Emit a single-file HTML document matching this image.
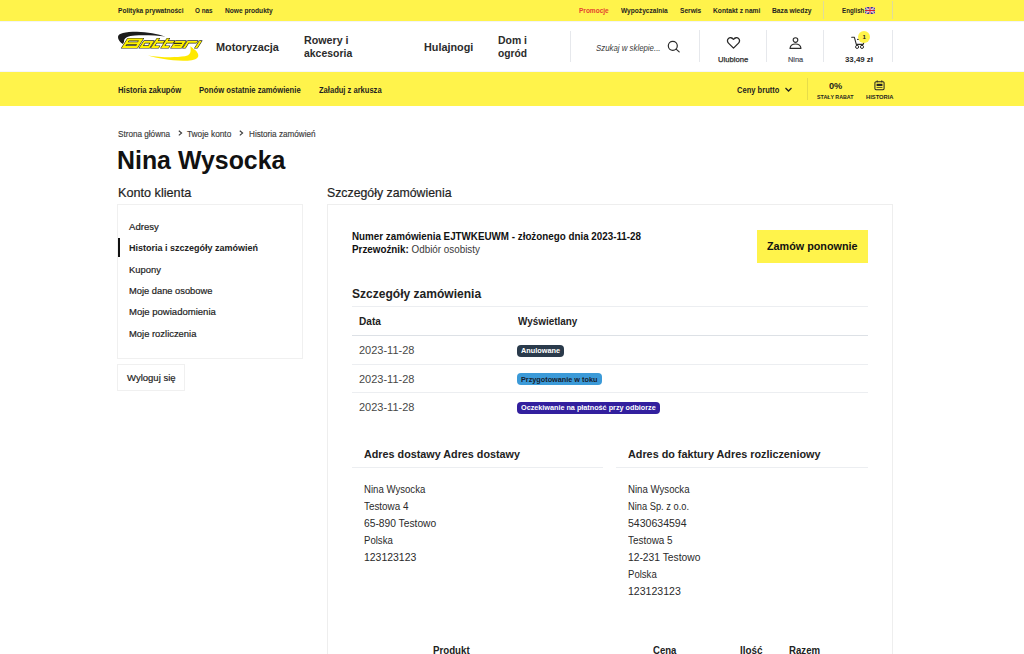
<!DOCTYPE html>
<html><head><meta charset="utf-8"><style>
html,body{margin:0;padding:0;}
body{width:1024px;height:654px;overflow:hidden;position:relative;background:#fff;font-family:"Liberation Sans",sans-serif;}
.t{position:absolute;white-space:nowrap;line-height:1.117;transform-origin:0 0;}
.a{position:absolute;}
</style></head><body>
<div class="a" style="left:0;top:0;width:1024px;height:21px;background:#fff34b;"></div>
<div class="a" style="left:0;top:21px;width:1024px;height:1px;background:#f2f3f8;"></div>
<div class="a" style="left:0;top:71px;width:1024px;height:1px;background:#f5f6fa;"></div>
<div class="a" style="left:823px;top:1px;width:1px;height:18px;background:#e0dc9a;"></div>
<div class="a" style="left:892px;top:1px;width:1px;height:18px;background:#e0dc9a;"></div>
<svg class="a" style="left:865px;top:7px;" width="10" height="7" viewBox="0 0 60 42"><rect width="60" height="42" rx="4" fill="#283f8f"/><path d="M0,0 L60,42 M60,0 L0,42" stroke="#fff" stroke-width="8"/><path d="M0,0 L60,42 M60,0 L0,42" stroke="#d22" stroke-width="3"/><path d="M30,0 V42 M0,21 H60" stroke="#fff" stroke-width="12"/><path d="M30,0 V42 M0,21 H60" stroke="#d3202f" stroke-width="7"/></svg>
<!-- header separators -->
<div class="a" style="left:570px;top:31px;width:1px;height:31px;background:#e6e8ec;"></div>
<div class="a" style="left:699px;top:30px;width:1px;height:32px;background:#e6e8ec;"></div>
<div class="a" style="left:766px;top:30px;width:1px;height:32px;background:#e6e8ec;"></div>
<div class="a" style="left:823px;top:30px;width:1px;height:32px;background:#e6e8ec;"></div>
<div class="a" style="left:892px;top:30px;width:1px;height:32px;background:#e6e8ec;"></div>
<!-- logo -->
<svg class="a" style="left:110px;top:28px;" width="100" height="36" viewBox="110 28 100 36">
<path d="M118,37 C118,33.3 125,31.8 137,31.8 C147,32 158,34.2 165.5,36.6 C157,35.4 145,35 135,35.4 C128,35.8 124.8,37.5 124.2,40 L123.6,44.2 C120.5,43 118.1,40.2 118,37 Z" fill="#1c1c1c"/>
<path d="M148,55.4 C160,57.5 175,57.6 185,56.3 C190,55.3 191.5,52.5 190.3,46.3 C196,50 199,53.5 198.2,56.5 C197,60 190,61 183,60.7 C170,60.3 157,58.2 148,55.4 Z" fill="#ffe900"/>
<g transform="translate(31.09,0) skewX(-33)">
<path d="M121.70,38.60 H137.30 V47.90 H121.70 Z M124.10,40.50 H134.20 V42.30 H124.10 Z M124.10,44.20 H134.80 V46.00 H124.10 Z M139.40,41.00 H149.40 V47.90 H139.40 Z M141.70,42.85 H147.10 V46.00 H141.70 Z M151,38.6 H153.3 V41 H159.8 V42.85 H153.3 V46.05 H158.4 V47.9 H151 Z M161,38.6 H163.3 V41 H169.8 V42.85 H163.3 V46.05 H168.4 V47.9 H161 Z M171,41 H181.4 V47.9 H171 V43.9 H179.1 V42.85 H171 Z M173.30,45.60 H179.10 V46.10 H173.30 Z M183,41 H193.2 V42.85 H185.3 V47.9 H183 Z M194.90,41.00 H197.20 V47.90 H194.90 Z" fill="#fff" stroke="#fff" stroke-width="2.6" stroke-linejoin="round" fill-rule="evenodd"/>
<path d="M121.70,38.60 H137.30 V47.90 H121.70 Z M124.10,40.50 H134.20 V42.30 H124.10 Z M124.10,44.20 H134.80 V46.00 H124.10 Z M139.40,41.00 H149.40 V47.90 H139.40 Z M141.70,42.85 H147.10 V46.00 H141.70 Z M151,38.6 H153.3 V41 H159.8 V42.85 H153.3 V46.05 H158.4 V47.9 H151 Z M161,38.6 H163.3 V41 H169.8 V42.85 H163.3 V46.05 H168.4 V47.9 H161 Z M171,41 H181.4 V47.9 H171 V43.9 H179.1 V42.85 H171 Z M173.30,45.60 H179.10 V46.10 H173.30 Z M183,41 H193.2 V42.85 H185.3 V47.9 H183 Z M194.90,41.00 H197.20 V47.90 H194.90 Z" fill="#2e2e22" stroke="#2e2e22" stroke-width="1.35" stroke-linejoin="round" fill-rule="evenodd"/>
<path d="M121.70,38.60 H137.30 V47.90 H121.70 Z M124.10,40.50 H134.20 V42.30 H124.10 Z M124.10,44.20 H134.80 V46.00 H124.10 Z M139.40,41.00 H149.40 V47.90 H139.40 Z M141.70,42.85 H147.10 V46.00 H141.70 Z M151,38.6 H153.3 V41 H159.8 V42.85 H153.3 V46.05 H158.4 V47.9 H151 Z M161,38.6 H163.3 V41 H169.8 V42.85 H163.3 V46.05 H168.4 V47.9 H161 Z M171,41 H181.4 V47.9 H171 V43.9 H179.1 V42.85 H171 Z M173.30,45.60 H179.10 V46.10 H173.30 Z M183,41 H193.2 V42.85 H185.3 V47.9 H183 Z M194.90,41.00 H197.20 V47.90 H194.90 Z" fill="#fff200" fill-rule="evenodd"/>
</g>
</svg>
<!-- search icon -->
<svg class="a" style="left:666px;top:39px;" width="15" height="15" viewBox="0 0 15 15"><circle cx="6.8" cy="6.8" r="4.5" fill="none" stroke="#2a2a2a" stroke-width="1.2"/><path d="M10.1,10.1 L13.2,12.9" stroke="#2a2a2a" stroke-width="1.2" stroke-linecap="round"/></svg>
<!-- heart -->
<svg class="a" style="left:725.6px;top:36.9px;" width="15" height="12.6" viewBox="0 0 16 14"><path d="M8,12.4 L2.4,6.8 C0.9,5.3 0.9,2.9 2.4,1.6 C3.9,0.3 6.2,0.5 8,2.6 C9.8,0.5 12.1,0.3 13.6,1.6 C15.1,2.9 15.1,5.3 13.6,6.8 Z" fill="none" stroke="#2a2a2a" stroke-width="1.45" stroke-linejoin="round"/></svg>
<!-- user -->
<svg class="a" style="left:788.5px;top:36.9px;" width="13" height="13" viewBox="0 0 14 14"><circle cx="7" cy="3.3" r="2.5" fill="none" stroke="#2a2a2a" stroke-width="1.2"/><path d="M1.1,12.3 C1.4,8.9 4,7.5 7,7.5 C10,7.5 12.6,8.9 12.9,12.3 Z" fill="none" stroke="#2a2a2a" stroke-width="1.2" stroke-linejoin="round"/></svg>
<!-- cart -->
<svg class="a" style="left:851px;top:36px;" width="14" height="14" viewBox="0 0 14 14"><path d="M0.7,1.3 H3.4 L5.3,8.4 H12.2 L13,6" fill="none" stroke="#2a2a2a" stroke-width="1.1" stroke-linejoin="round" stroke-linecap="round"/><path d="M6,3.4 H8" stroke="#2a2a2a" stroke-width="1"/><circle cx="6.1" cy="10.9" r="1.55" fill="none" stroke="#2a2a2a" stroke-width="1"/><circle cx="11" cy="10.9" r="1.55" fill="none" stroke="#2a2a2a" stroke-width="1"/></svg>
<div class="a" style="left:858px;top:30.5px;width:12.4px;height:12.4px;border-radius:50%;background:#fff34b;"></div>
<div class="a" style="left:858px;top:31.7px;width:12.4px;text-align:center;font-size:6.2px;font-weight:700;color:#222;line-height:9px;">1</div>
<!-- sub bar -->
<div class="a" style="left:0;top:72px;width:1024px;height:34px;background:#fff34b;"></div>
<svg class="a" style="left:784px;top:86px;" width="9" height="7" viewBox="0 0 9 7"><path d="M1.5,2 L4.5,5 L7.5,2" fill="none" stroke="#222" stroke-width="1.3"/></svg>
<div class="a" style="left:807px;top:78px;width:1px;height:22px;background:#e6dc4a;"></div>
<svg class="a" style="left:873.5px;top:80.3px;" width="11" height="10.3" viewBox="0 0 12 11"><rect x="1" y="1.8" width="10" height="8.6" rx="1.2" fill="none" stroke="#222" stroke-width="1.1"/><path d="M3.5,0.3 V2.5 M8.5,0.3 V2.5" stroke="#222" stroke-width="1"/><rect x="2.8" y="4" width="6.4" height="2.4" fill="#222"/><path d="M2.8,8 H9.2" stroke="#222" stroke-width="0.8"/></svg>
<!-- breadcrumb chevrons -->
<svg class="a" style="left:177.5px;top:130.3px;" width="5" height="6" viewBox="0 0 5 6"><path d="M0.8,0.7 L3.6,3 L0.8,5.3" fill="none" stroke="#3a3a3a" stroke-width="1.1"/></svg>
<svg class="a" style="left:238.8px;top:130.3px;" width="5" height="6" viewBox="0 0 5 6"><path d="M0.8,0.7 L3.6,3 L0.8,5.3" fill="none" stroke="#3a3a3a" stroke-width="1.1"/></svg>
<!-- left panel -->
<div class="a" style="left:117px;top:204px;width:184px;height:153px;border:1px solid #f0f0f0;"></div>
<div class="a" style="left:117.8px;top:238.3px;width:2.5px;height:18.8px;background:#111;"></div>
<div class="a" style="left:117px;top:364px;width:66px;height:25px;border:1px solid #f0f0f0;"></div>
<!-- right panel -->
<div class="a" style="left:326.6px;top:204.3px;width:564.8px;height:500px;border:1px solid #eeeeee;"></div>
<div class="a" style="left:756.9px;top:229.7px;width:110.9px;height:33.3px;background:#fff34b;"></div>
<!-- table -->
<div class="a" style="left:352px;top:306px;width:516px;height:1px;background:#eceef1;"></div>
<div class="a" style="left:352px;top:334.5px;width:516px;height:1.5px;background:#dde1e6;"></div>
<div class="a" style="left:352px;top:364px;width:516px;height:1px;background:#eceef1;"></div>
<div class="a" style="left:352px;top:392px;width:516px;height:1px;background:#eceef1;"></div>
<div class="a" style="left:517px;top:344.7px;width:47.2px;height:11.9px;border-radius:4px;background:#2a3a4b;"></div>
<div class="a" style="left:517px;top:373.1px;width:84.6px;height:12px;border-radius:4px;background:#3b9ad8;"></div>
<div class="a" style="left:517px;top:401.8px;width:142.6px;height:11.8px;border-radius:4px;background:#321f9e;"></div>
<!-- address borders -->
<div class="a" style="left:352.3px;top:466.5px;width:251px;height:1px;background:#eceef1;"></div>
<div class="a" style="left:616.1px;top:467px;width:252px;height:1px;background:#eceef1;"></div>

<div class="t" id="tb1" style="left:118.00px;top:7.00px;font-size:7.80px;font-weight:700;color:#1f1f1f;transform:scaleX(0.8458);">Polityka prywatności</div>
<div class="t" id="tb2" style="left:195.00px;top:7.00px;font-size:7.80px;font-weight:700;color:#1f1f1f;transform:scaleX(0.8121);">O nas</div>
<div class="t" id="tb3" style="left:224.80px;top:7.00px;font-size:7.80px;font-weight:700;color:#1f1f1f;transform:scaleX(0.8468);">Nowe produkty</div>
<div class="t" id="tb4" style="left:579.20px;top:7.00px;font-size:7.80px;font-weight:700;color:#e5432f;transform:scaleX(0.8355);">Promocje</div>
<div class="t" id="tb5" style="left:620.80px;top:7.00px;font-size:7.80px;font-weight:700;color:#1f1f1f;transform:scaleX(0.8459);">Wypożyczalnia</div>
<div class="t" id="tb6" style="left:679.80px;top:7.00px;font-size:7.80px;font-weight:700;color:#1f1f1f;transform:scaleX(0.8472);">Serwis</div>
<div class="t" id="tb7" style="left:713.00px;top:7.00px;font-size:7.80px;font-weight:700;color:#1f1f1f;transform:scaleX(0.8548);">Kontakt z nami</div>
<div class="t" id="tb8" style="left:772.30px;top:7.00px;font-size:7.80px;font-weight:700;color:#1f1f1f;transform:scaleX(0.8599);">Baza wiedzy</div>
<div class="t" id="tb9" style="left:841.80px;top:7.00px;font-size:7.80px;font-weight:700;color:#1f1f1f;transform:scaleX(0.7951);">English</div>
<div class="t" id="mn1" style="left:216.20px;top:41.00px;font-size:11.80px;font-weight:700;color:#2b2b2b;transform:scaleX(0.9225);">Motoryzacja</div>
<div class="t" id="mn2" style="left:303.50px;top:34.00px;font-size:11.80px;font-weight:700;color:#2b2b2b;transform:scaleX(0.9070);">Rowery i</div>
<div class="t" id="mn3" style="left:303.50px;top:47.00px;font-size:11.80px;font-weight:700;color:#2b2b2b;transform:scaleX(0.8852);">akcesoria</div>
<div class="t" id="mn4" style="left:424.00px;top:41.00px;font-size:11.80px;font-weight:700;color:#2b2b2b;transform:scaleX(0.9172);">Hulajnogi</div>
<div class="t" id="mn5" style="left:498.20px;top:34.00px;font-size:11.80px;font-weight:700;color:#2b2b2b;transform:scaleX(0.8847);">Dom i</div>
<div class="t" id="mn6" style="left:498.20px;top:47.00px;font-size:11.80px;font-weight:700;color:#2b2b2b;transform:scaleX(0.8677);">ogród</div>
<div class="t" id="srch" style="left:596.30px;top:44.00px;font-size:8.80px;font-weight:400;color:#3c3c3c;transform:scaleX(0.8912);font-style:italic;">Szukaj w sklepie...</div>
<div class="t" id="ul" style="left:718.40px;top:56.00px;font-size:8.00px;font-weight:400;color:#2a2a2a;transform:scaleX(0.9564);-webkit-text-stroke:0.25px #2a2a2a;">Ulubione</div>
<div class="t" id="nina" style="left:788.00px;top:56.00px;font-size:8.00px;font-weight:400;color:#474b55;transform:scaleX(0.9238);-webkit-text-stroke:0.2px #474b55;">Nina</div>
<div class="t" id="cart" style="left:844.70px;top:56.00px;font-size:8.00px;font-weight:700;color:#2a2a2a;transform:scaleX(0.9800);">33,49 zł</div>
<div class="t" id="sb1" style="left:117.70px;top:85.00px;font-size:9.00px;font-weight:700;color:#1f1f1f;transform:scaleX(0.8539);">Historia zakupów</div>
<div class="t" id="sb2" style="left:198.90px;top:85.00px;font-size:9.00px;font-weight:700;color:#1f1f1f;transform:scaleX(0.8508);">Ponów ostatnie zamówienie</div>
<div class="t" id="sb3" style="left:318.60px;top:85.00px;font-size:9.00px;font-weight:700;color:#1f1f1f;transform:scaleX(0.8399);">Załaduj z arkusza</div>
<div class="t" id="sb4" style="left:736.80px;top:85.00px;font-size:9.00px;font-weight:700;color:#1f1f1f;transform:scaleX(0.8396);">Ceny brutto</div>
<div class="t" id="sb5" style="left:828.70px;top:81.00px;font-size:9.40px;font-weight:700;color:#1f1f1f;transform:scaleX(0.9806);">0%</div>
<div class="t" id="sb6" style="left:816.90px;top:94.00px;font-size:5.80px;font-weight:700;color:#1f1f1f;transform:scaleX(0.9139);">STAŁY RABAT</div>
<div class="t" id="sb7" style="left:865.60px;top:94.00px;font-size:5.80px;font-weight:700;color:#1f1f1f;transform:scaleX(0.9966);">HISTORIA</div>
<div class="t" id="bc1" style="left:118.00px;top:129.00px;font-size:9.20px;font-weight:400;color:#3a3a3a;transform:scaleX(0.8868);-webkit-text-stroke:0.15px #3a3a3a;">Strona główna</div>
<div class="t" id="bc2" style="left:187.30px;top:129.00px;font-size:9.20px;font-weight:400;color:#3a3a3a;transform:scaleX(0.9035);-webkit-text-stroke:0.15px #3a3a3a;">Twoje konto</div>
<div class="t" id="bc3" style="left:248.60px;top:129.00px;font-size:9.20px;font-weight:400;color:#3a3a3a;transform:scaleX(0.8873);-webkit-text-stroke:0.15px #3a3a3a;">Historia zamówień</div>
<div class="t" id="h1" style="left:117.30px;top:146.00px;font-size:25.60px;font-weight:700;color:#111;transform:scaleX(0.9730);">Nina Wysocka</div>
<div class="t" id="kk" style="left:117.50px;top:187.00px;font-size:12.40px;font-weight:400;color:#1e1e1e;transform:scaleX(1.0218);-webkit-text-stroke:0.2px #1e1e1e;">Konto klienta</div>
<div class="t" id="sz" style="left:327.30px;top:187.00px;font-size:12.40px;font-weight:400;color:#1e1e1e;transform:scaleX(0.9933);-webkit-text-stroke:0.2px #1e1e1e;">Szczegóły zamówienia</div>
<div class="t" id="lm0" style="left:129.40px;top:222.00px;font-size:9.80px;font-weight:400;color:#222;transform:scaleX(0.9770);-webkit-text-stroke:0.2px #222;">Adresy</div>
<div class="t" id="lm1" style="left:129.40px;top:243.00px;font-size:9.80px;font-weight:700;color:#222;transform:scaleX(0.9191);">Historia i szczegóły zamówień</div>
<div class="t" id="lm2" style="left:129.40px;top:265.00px;font-size:9.80px;font-weight:400;color:#222;transform:scaleX(0.9598);-webkit-text-stroke:0.2px #222;">Kupony</div>
<div class="t" id="lm3" style="left:129.40px;top:286.00px;font-size:9.80px;font-weight:400;color:#222;transform:scaleX(0.9509);-webkit-text-stroke:0.2px #222;">Moje dane osobowe</div>
<div class="t" id="lm4" style="left:129.40px;top:307.00px;font-size:9.80px;font-weight:400;color:#222;transform:scaleX(0.9719);-webkit-text-stroke:0.2px #222;">Moje powiadomienia</div>
<div class="t" id="lm5" style="left:129.40px;top:329.00px;font-size:9.80px;font-weight:400;color:#222;transform:scaleX(0.9594);-webkit-text-stroke:0.2px #222;">Moje rozliczenia</div>
<div class="t" id="wy" style="left:127.20px;top:373.00px;font-size:9.80px;font-weight:400;color:#222;transform:scaleX(0.9717);-webkit-text-stroke:0.2px #222;">Wyloguj się</div>
<div class="t" id="num" style="left:352.20px;top:231.00px;font-size:10.60px;font-weight:700;color:#111;transform:scaleX(0.9263);">Numer zamówienia EJTWKEUWM - złożonego dnia 2023-11-28</div>
<div class="t" id="prz" style="left:352.20px;top:244.00px;font-size:10.60px;font-weight:400;color:#3a3a3a;transform:scaleX(0.9283);"><b style="color:#111">Przewoźnik:</b> Odbiór osobisty</div>
<div class="t" id="zam" style="left:767.30px;top:240.00px;font-size:11.80px;font-weight:700;color:#111;transform:scaleX(0.9144);">Zamów ponownie</div>
<div class="t" id="h3" style="left:352.30px;top:287.00px;font-size:13.40px;font-weight:700;color:#222;transform:scaleX(0.8989);">Szczegóły zamówienia</div>
<div class="t" id="th1" style="left:359.10px;top:316.00px;font-size:10.60px;font-weight:700;color:#222;transform:scaleX(0.9535);">Data</div>
<div class="t" id="th2" style="left:517.70px;top:316.00px;font-size:10.60px;font-weight:700;color:#222;transform:scaleX(0.9368);">Wyświetlany</div>
<div class="t" id="d0" style="left:359.00px;top:344.00px;font-size:11.00px;font-weight:400;color:#474747;transform:scaleX(0.9990);">2023-11-28</div>
<div class="t" id="d1" style="left:359.00px;top:373.00px;font-size:11.00px;font-weight:400;color:#474747;transform:scaleX(0.9990);">2023-11-28</div>
<div class="t" id="d2" style="left:359.00px;top:401.00px;font-size:11.00px;font-weight:400;color:#474747;transform:scaleX(0.9990);">2023-11-28</div>
<div class="t" id="ad1" style="left:363.80px;top:448.00px;font-size:11.80px;font-weight:700;color:#222;transform:scaleX(0.9140);">Adres dostawy Adres dostawy</div>
<div class="t" id="ad2" style="left:628.40px;top:448.00px;font-size:11.80px;font-weight:700;color:#222;transform:scaleX(0.9167);">Adres do faktury Adres rozliczeniowy</div>
<div class="t" id="al0" style="left:363.80px;top:484.00px;font-size:10.00px;font-weight:400;color:#2a2a2a;transform:scaleX(0.9604);">Nina Wysocka</div>
<div class="t" id="al1" style="left:363.80px;top:501.00px;font-size:10.00px;font-weight:400;color:#2a2a2a;transform:scaleX(0.9860);">Testowa 4</div>
<div class="t" id="al2" style="left:363.80px;top:518.00px;font-size:10.00px;font-weight:400;color:#2a2a2a;transform:scaleX(1.0252);">65-890 Testowo</div>
<div class="t" id="al3" style="left:363.80px;top:535.00px;font-size:10.00px;font-weight:400;color:#2a2a2a;transform:scaleX(0.9595);">Polska</div>
<div class="t" id="al4" style="left:363.80px;top:552.00px;font-size:10.00px;font-weight:400;color:#2a2a2a;transform:scaleX(1.0447);">123123123</div>
<div class="t" id="ar0" style="left:628.20px;top:484.00px;font-size:10.00px;font-weight:400;color:#2a2a2a;transform:scaleX(0.9635);">Nina Wysocka</div>
<div class="t" id="ar1" style="left:628.20px;top:501.00px;font-size:10.00px;font-weight:400;color:#2a2a2a;transform:scaleX(0.9300);">Nina Sp. z o.o.</div>
<div class="t" id="ar2" style="left:628.20px;top:518.00px;font-size:10.00px;font-weight:400;color:#2a2a2a;transform:scaleX(1.0535);">5430634594</div>
<div class="t" id="ar3" style="left:628.20px;top:535.00px;font-size:10.00px;font-weight:400;color:#2a2a2a;transform:scaleX(0.9904);">Testowa 5</div>
<div class="t" id="ar4" style="left:628.20px;top:552.00px;font-size:10.00px;font-weight:400;color:#2a2a2a;transform:scaleX(1.0281);">12-231 Testowo</div>
<div class="t" id="ar5" style="left:628.20px;top:569.00px;font-size:10.00px;font-weight:400;color:#2a2a2a;transform:scaleX(0.9562);">Polska</div>
<div class="t" id="ar6" style="left:628.20px;top:586.00px;font-size:10.00px;font-weight:400;color:#2a2a2a;transform:scaleX(1.0547);">123123123</div>
<div class="t" id="p1" style="left:432.70px;top:645.00px;font-size:10.60px;font-weight:700;color:#222;transform:scaleX(0.9168);">Produkt</div>
<div class="t" id="p2" style="left:652.70px;top:645.00px;font-size:10.60px;font-weight:700;color:#222;transform:scaleX(0.9033);">Cena</div>
<div class="t" id="p3" style="left:739.60px;top:645.00px;font-size:10.60px;font-weight:700;color:#222;transform:scaleX(0.9356);">Ilość</div>
<div class="t" id="p4" style="left:788.80px;top:645.00px;font-size:10.60px;font-weight:700;color:#222;transform:scaleX(0.9105);">Razem</div>
<div class="t" id="bg1" style="left:521.40px;top:347.00px;font-size:7.40px;font-weight:700;color:#fff;transform:scaleX(0.9893);">Anulowane</div>
<div class="t" id="bg2" style="left:521.40px;top:376.00px;font-size:7.40px;font-weight:700;color:#17202c;transform:scaleX(0.9844);">Przygotowanie w toku</div>
<div class="t" id="bg3" style="left:521.40px;top:404.00px;font-size:7.40px;font-weight:700;color:#fff;transform:scaleX(0.9790);">Oczekiwanie na płatność przy odbiorze</div>
</body></html>
